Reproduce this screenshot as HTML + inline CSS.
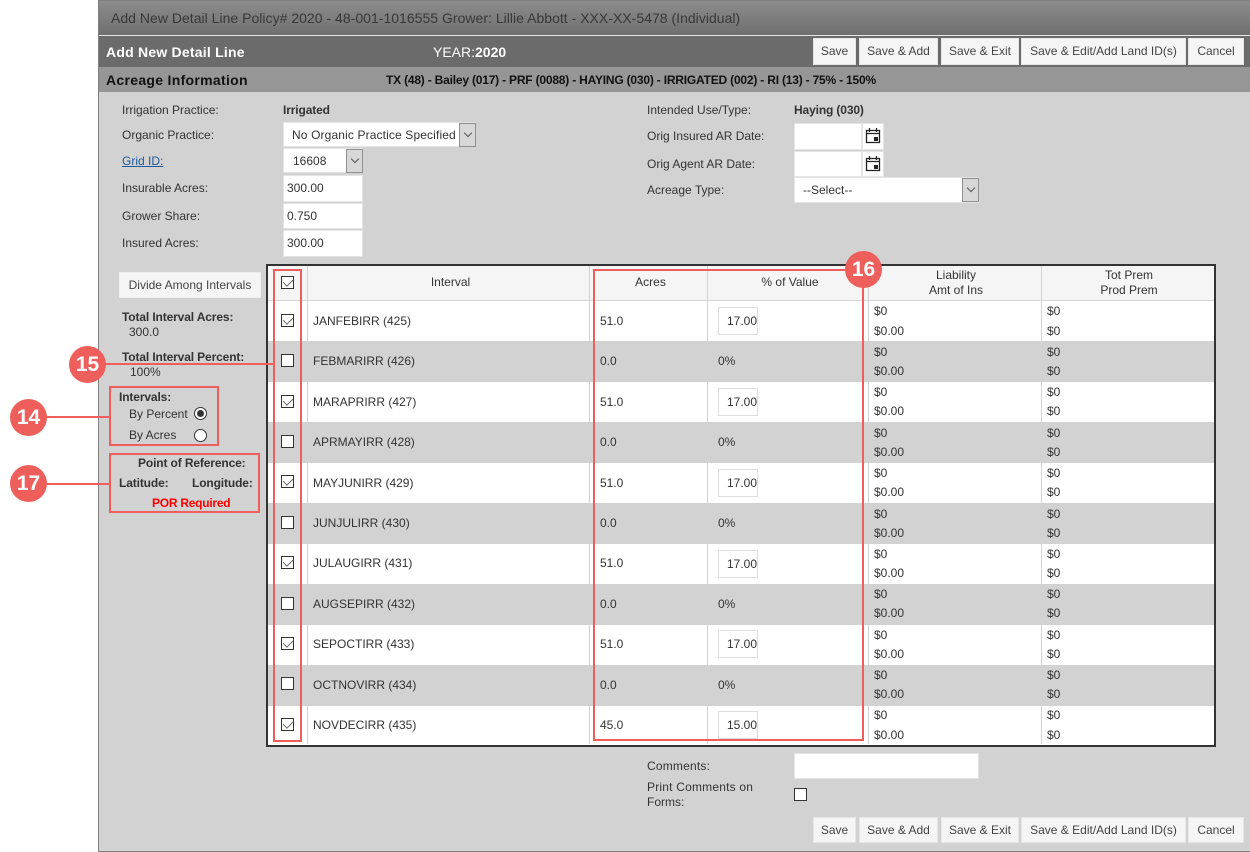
<!DOCTYPE html>
<html><head><meta charset="utf-8"><style>
html,body{margin:0;padding:0;background:#fff}
body{width:1250px;height:852px;position:relative;overflow:hidden;font-family:"Liberation Sans",sans-serif;font-size:12px;color:#333}
.a,.t,.b,.cb,.i,.r,.rb,.c,.l{position:absolute;box-sizing:border-box}
.t{white-space:nowrap;line-height:14px}
.w{font-weight:bold;letter-spacing:-.13px}
.ctr{text-align:center}
.b{background:#f5f5f5;border:1px solid #e6e6e6;text-align:center;line-height:25px;height:27px;color:#444}
.i{background:#fff;border:1px solid #e4e4e4;line-height:24px;padding-left:7px;color:#333}
.ar{position:absolute;box-sizing:border-box;background:#d8d8d8;border:1px solid #8f8f8f}
.ar:after{content:"";position:absolute;left:5px;top:6px;width:5px;height:5px;border-right:1px solid #555;border-bottom:1px solid #555;transform:rotate(45deg)}
.cb{width:13px;height:13px;background:#fff;border:1px solid #333;left:281px}
.cb.on:after{content:"";position:absolute;left:3px;top:0;width:5px;height:8px;border-right:1.500px solid #666;border-bottom:1.500px solid #666;transform:rotate(45deg)}
.r{left:268px;width:946px;background:#fff}
.r.g{background:#d2d2d2}
.l{background:#d2d2d2;width:1px;top:266px;height:478px}
.rb{border:2px solid #ee5f5b}
.rl{position:absolute;background:#ee5f5b;height:2px}
.c{width:37px;height:37px;border-radius:50%;background:#ee5f5b;color:#fff;font-weight:bold;font-size:21px;line-height:37px;text-align:center}
.pi{position:absolute;box-sizing:border-box;width:40px;height:28px;left:718px;background:#fff;border:1px solid #dedede;line-height:26px;padding-left:8px;font-size:12px;white-space:nowrap}
</style></head><body>
<div class="a" style="left:98px;top:0;width:1152px;height:852px;background:#d2d2d2;border:1px solid #808080;border-right:0"></div>
<div class="a" style="left:99px;top:1px;width:1151px;height:34px;background:linear-gradient(#8c8c8c,#6f6f6f)"></div>
<div class="a" style="left:99px;top:35px;width:1151px;height:1px;background:#e8e8e8"></div>
<div class="a" style="left:99px;top:36px;width:1151px;height:31px;background:#6b6b6b"></div>
<div class="a" style="left:99px;top:67px;width:1151px;height:25px;background:#969696"></div>

<div class="t" style="left:111px;top:10px;font-size:14px;color:#383838;line-height:16px;letter-spacing:.02px">Add New Detail Line Policy# 2020 - 48-001-1016555 Grower: Lillie Abbott - XXX-XX-5478 (Individual)</div>
<div class="t" style="left:106px;top:44px;font-size:14px;font-weight:bold;color:#fff;line-height:16px;letter-spacing:.22px">Add New Detail Line</div>
<div class="t" style="left:433px;top:44px;font-size:14px;color:#fff;line-height:16px">YEAR:<b>2020</b></div>
<div class="t" style="left:106px;top:72px;font-size:14px;font-weight:bold;color:#111;line-height:16px;letter-spacing:.3px">Acreage Information</div>
<div class="t" style="left:386px;top:73px;font-weight:bold;color:#111;letter-spacing:-.2px">TX (48) - Bailey (017) - PRF (0088) - HAYING (030) - IRRIGATED (002) - RI (13) - 75% - 150%</div>

<div class="b" style="left:813px;top:38px;width:43px">Save</div>
<div class="b" style="left:859px;top:38px;width:79px">Save &amp; Add</div>
<div class="b" style="left:941px;top:38px;width:78px">Save &amp; Exit</div>
<div class="b" style="left:1021px;top:38px;width:165px">Save &amp; Edit/Add Land ID(s)</div>
<div class="b" style="left:1188px;top:38px;width:56px">Cancel</div>

<div class="t" style="left:122px;top:103px">Irrigation Practice:</div>
<div class="t w" style="left:283px;top:103px">Irrigated</div>
<div class="t" style="left:122px;top:128px">Organic Practice:</div>
<div class="i" style="left:283px;top:122px;width:193px;height:25px;padding-left:8px;letter-spacing:.13px;white-space:nowrap">No Organic Practice Specified</div>
<div class="ar" style="left:459px;top:123px;width:17px;height:24px"></div>
<div class="t" style="left:122px;top:154px;color:#1a5a9c;text-decoration:underline">Grid ID:</div>
<div class="i" style="left:283px;top:148px;width:80px;height:25px;padding-left:9px">16608</div>
<div class="ar" style="left:346px;top:149px;width:17px;height:24px"></div>
<div class="t" style="left:122px;top:181px">Insurable Acres:</div>
<div class="i" style="left:283px;top:175px;width:80px;height:27px;padding-left:3px;line-height:25px">300.00</div>
<div class="t" style="left:122px;top:209px">Grower Share:</div>
<div class="i" style="left:283px;top:203px;width:80px;height:26px;padding-left:3px">0.750</div>
<div class="t" style="left:122px;top:236px">Insured Acres:</div>
<div class="i" style="left:283px;top:230px;width:80px;height:27px;padding-left:3px;line-height:25px">300.00</div>

<div class="t" style="left:647px;top:103px">Intended Use/Type:</div>
<div class="t w" style="left:794px;top:103px">Haying (030)</div>
<div class="t" style="left:647px;top:129px">Orig Insured AR Date:</div>
<div class="i" style="left:794px;top:123px;width:68px;height:27px"></div>
<div class="i" style="left:862px;top:123px;width:22px;height:27px"></div>
<svg class="a" style="left:865px;top:127px" width="16" height="17" viewBox="0 0 16 17"><path d="M1.500 3.500h13v12h-13zM1.500 6.500h13M4.500 1v4M11.500 1v4" fill="none" stroke="#222" stroke-width="1.300"/><rect x="9" y="10" width="4" height="4" fill="#222"/></svg>
<div class="t" style="left:647px;top:157px">Orig Agent AR Date:</div>
<div class="i" style="left:794px;top:151px;width:68px;height:26px"></div>
<div class="i" style="left:862px;top:151px;width:22px;height:26px"></div>
<svg class="a" style="left:865px;top:155px" width="16" height="17" viewBox="0 0 16 17"><path d="M1.500 3.500h13v12h-13zM1.500 6.500h13M4.500 1v4M11.500 1v4" fill="none" stroke="#222" stroke-width="1.300"/><rect x="9" y="10" width="4" height="4" fill="#222"/></svg>
<div class="t" style="left:647px;top:183px">Acreage Type:</div>
<div class="i" style="left:794px;top:177px;width:185px;height:26px;padding-left:8px">--Select--</div>
<div class="ar" style="left:962px;top:178px;width:17px;height:24px"></div>

<div class="b" style="left:119px;top:272px;width:142px;height:26px;line-height:24px;border-color:#eee">Divide Among Intervals</div>
<div class="t w" style="left:122px;top:310px">Total Interval Acres:</div>
<div class="t" style="left:129px;top:325px">300.0</div>
<div class="t w" style="left:122px;top:350px">Total Interval Percent:</div>
<div class="t" style="left:130px;top:365px">100%</div>
<div class="t w" style="left:119px;top:390px">Intervals:</div>
<div class="t" style="left:129px;top:407px">By Percent</div>
<div class="a" style="left:194px;top:407px;width:13px;height:13px;border-radius:50%;background:#fff;border:1px solid #333"></div>
<div class="a" style="left:197px;top:410px;width:7px;height:7px;border-radius:50%;background:#333"></div>
<div class="t" style="left:129px;top:428px">By Acres</div>
<div class="a" style="left:194px;top:429px;width:13px;height:13px;border-radius:50%;background:#fff;border:1px solid #333"></div>
<div class="t w" style="left:138px;top:456px">Point of Reference:</div>
<div class="t w" style="left:119px;top:476px">Latitude:</div>
<div class="t w" style="left:192px;top:476px">Longitude:</div>
<div class="t w" style="left:152px;top:496px;color:#f00;letter-spacing:-.25px">POR Required</div>

<!-- table -->
<div class="a" style="left:266px;top:264px;width:950px;height:483px;background:#fff;border:2px solid #333"></div>
<div class="a" style="left:268px;top:266px;width:946px;height:35px;background:#f5f5f5;border-bottom:1px solid #d8d8d8"></div>
<div class="r g" style="top:341px;height:41px"></div>
<div class="r g" style="top:422px;height:41px"></div>
<div class="r g" style="top:503px;height:41px"></div>
<div class="r g" style="top:584px;height:41px"></div>
<div class="r g" style="top:665px;height:41px"></div>
<div class="l" style="left:307px"></div>
<div class="l" style="left:589px"></div>
<div class="l" style="left:707px"></div>
<div class="l" style="left:868px"></div>
<div class="l" style="left:1041px"></div>

<div class="t ctr" style="left:310px;width:281px;top:275px">Interval</div>
<div class="t ctr" style="left:592px;width:117px;top:275px">Acres</div>
<div class="t ctr" style="left:710px;width:160px;top:275px">% of Value</div>
<div class="t ctr" style="left:870px;width:172px;top:268px">Liability</div>
<div class="t ctr" style="left:870px;width:172px;top:283px">Amt of Ins</div>
<div class="t ctr" style="left:1043px;width:172px;top:268px">Tot Prem</div>
<div class="t ctr" style="left:1043px;width:172px;top:283px">Prod Prem</div>
<div class="cb on" style="top:276px"></div>

<!-- rows -->
<div class="cb on" style="top:314px"></div><div class="t" style="left:313px;top:314px">JANFEBIRR (425)</div><div class="t" style="left:600px;top:314px">51.0</div><div class="pi" style="top:307px">17.00</div><div class="t" style="left:874px;top:304px">$0</div><div class="t" style="left:874px;top:324px">$0.00</div><div class="t" style="left:1047px;top:304px">$0</div><div class="t" style="left:1047px;top:324px">$0</div>
<div class="cb" style="top:354px"></div><div class="t" style="left:313px;top:354px">FEBMARIRR (426)</div><div class="t" style="left:600px;top:354px">0.0</div><div class="t" style="left:718px;top:354px">0%</div><div class="t" style="left:874px;top:345px">$0</div><div class="t" style="left:874px;top:364px">$0.00</div><div class="t" style="left:1047px;top:345px">$0</div><div class="t" style="left:1047px;top:364px">$0</div>
<div class="cb on" style="top:395px"></div><div class="t" style="left:313px;top:395px">MARAPRIRR (427)</div><div class="t" style="left:600px;top:395px">51.0</div><div class="pi" style="top:388px">17.00</div><div class="t" style="left:874px;top:385px">$0</div><div class="t" style="left:874px;top:404px">$0.00</div><div class="t" style="left:1047px;top:385px">$0</div><div class="t" style="left:1047px;top:404px">$0</div>
<div class="cb" style="top:435px"></div><div class="t" style="left:313px;top:435px">APRMAYIRR (428)</div><div class="t" style="left:600px;top:435px">0.0</div><div class="t" style="left:718px;top:435px">0%</div><div class="t" style="left:874px;top:426px">$0</div><div class="t" style="left:874px;top:445px">$0.00</div><div class="t" style="left:1047px;top:426px">$0</div><div class="t" style="left:1047px;top:445px">$0</div>
<div class="cb on" style="top:475px"></div><div class="t" style="left:313px;top:476px">MAYJUNIRR (429)</div><div class="t" style="left:600px;top:476px">51.0</div><div class="pi" style="top:469px">17.00</div><div class="t" style="left:874px;top:466px">$0</div><div class="t" style="left:874px;top:485px">$0.00</div><div class="t" style="left:1047px;top:466px">$0</div><div class="t" style="left:1047px;top:485px">$0</div>
<div class="cb" style="top:516px"></div><div class="t" style="left:313px;top:516px">JUNJULIRR (430)</div><div class="t" style="left:600px;top:516px">0.0</div><div class="t" style="left:718px;top:516px">0%</div><div class="t" style="left:874px;top:507px">$0</div><div class="t" style="left:874px;top:526px">$0.00</div><div class="t" style="left:1047px;top:507px">$0</div><div class="t" style="left:1047px;top:526px">$0</div>
<div class="cb on" style="top:556px"></div><div class="t" style="left:313px;top:556px">JULAUGIRR (431)</div><div class="t" style="left:600px;top:556px">51.0</div><div class="pi" style="top:550px">17.00</div><div class="t" style="left:874px;top:547px">$0</div><div class="t" style="left:874px;top:566px">$0.00</div><div class="t" style="left:1047px;top:547px">$0</div><div class="t" style="left:1047px;top:566px">$0</div>
<div class="cb" style="top:597px"></div><div class="t" style="left:313px;top:597px">AUGSEPIRR (432)</div><div class="t" style="left:600px;top:597px">0.0</div><div class="t" style="left:718px;top:597px">0%</div><div class="t" style="left:874px;top:587px">$0</div><div class="t" style="left:874px;top:606px">$0.00</div><div class="t" style="left:1047px;top:587px">$0</div><div class="t" style="left:1047px;top:606px">$0</div>
<div class="cb on" style="top:637px"></div><div class="t" style="left:313px;top:637px">SEPOCTIRR (433)</div><div class="t" style="left:600px;top:637px">51.0</div><div class="pi" style="top:630px">17.00</div><div class="t" style="left:874px;top:628px">$0</div><div class="t" style="left:874px;top:647px">$0.00</div><div class="t" style="left:1047px;top:628px">$0</div><div class="t" style="left:1047px;top:647px">$0</div>
<div class="cb" style="top:677px"></div><div class="t" style="left:313px;top:678px">OCTNOVIRR (434)</div><div class="t" style="left:600px;top:678px">0.0</div><div class="t" style="left:718px;top:678px">0%</div><div class="t" style="left:874px;top:668px">$0</div><div class="t" style="left:874px;top:687px">$0.00</div><div class="t" style="left:1047px;top:668px">$0</div><div class="t" style="left:1047px;top:687px">$0</div>
<div class="cb on" style="top:718px"></div><div class="t" style="left:313px;top:718px">NOVDECIRR (435)</div><div class="t" style="left:600px;top:718px">45.0</div><div class="pi" style="top:711px">15.00</div><div class="t" style="left:874px;top:708px">$0</div><div class="t" style="left:874px;top:728px">$0.00</div><div class="t" style="left:1047px;top:708px">$0</div><div class="t" style="left:1047px;top:728px">$0</div>

<!-- bottom -->
<div class="t" style="left:647px;top:759px;letter-spacing:.2px">Comments:</div>
<div class="i" style="left:794px;top:753px;width:185px;height:26px"></div>
<div class="t" style="left:647px;top:780px;letter-spacing:.2px">Print Comments on</div>
<div class="t" style="left:647px;top:795px">Forms:</div>
<div class="cb" style="left:794px;top:788px"></div>
<div class="b" style="left:813px;top:817px;width:43px;height:26px;line-height:24px">Save</div>
<div class="b" style="left:859px;top:817px;width:79px;height:26px;line-height:24px">Save &amp; Add</div>
<div class="b" style="left:941px;top:817px;width:78px;height:26px;line-height:24px">Save &amp; Exit</div>
<div class="b" style="left:1021px;top:817px;width:165px;height:26px;line-height:24px">Save &amp; Edit/Add Land ID(s)</div>
<div class="b" style="left:1188px;top:817px;width:56px;height:26px;line-height:24px">Cancel</div>

<!-- annotations -->
<div class="a rb" style="left:273px;top:269px;width:29px;height:473px"></div>
<div class="a rb" style="left:593px;top:269px;width:271px;height:472px"></div>
<div class="a rb" style="left:109px;top:386px;width:110px;height:60px"></div>
<div class="a rb" style="left:109px;top:453px;width:151px;height:60px"></div>
<div class="rl" style="left:100px;top:363px;width:173px"></div>
<div class="rl" style="left:40px;top:416px;width:70px"></div>
<div class="rl" style="left:40px;top:483px;width:70px"></div>
<div class="c" style="left:69px;top:346px">15</div>
<div class="c" style="left:10px;top:399px">14</div>
<div class="c" style="left:10px;top:465px">17</div>
<div class="c" style="left:845px;top:251px">16</div>
</body></html>
